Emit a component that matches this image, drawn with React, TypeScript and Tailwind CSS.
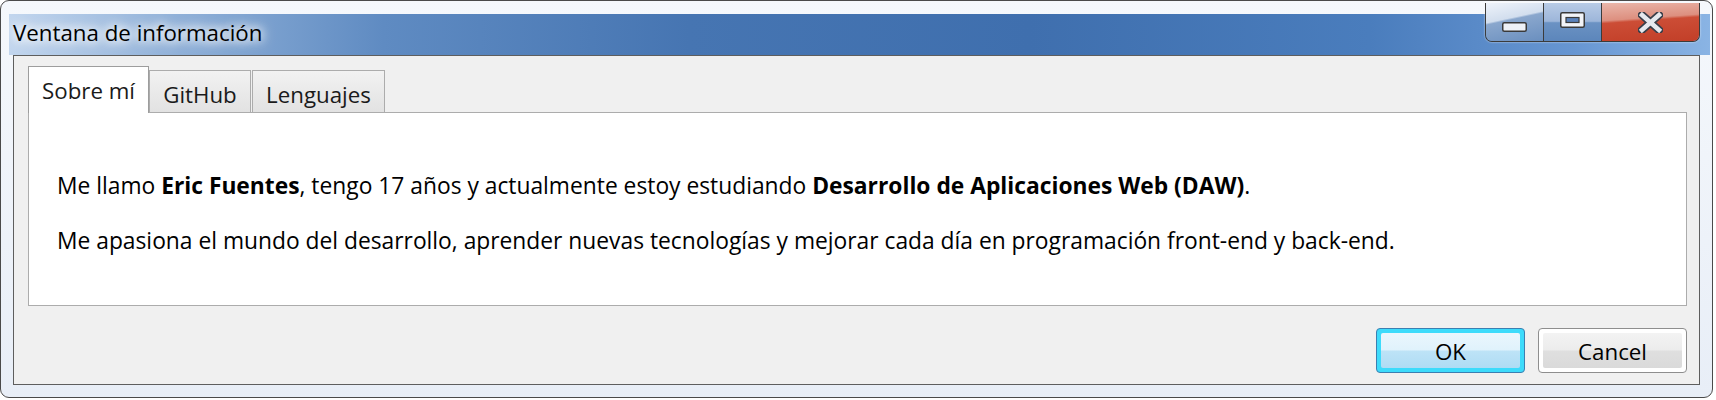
export default function App() {
  return (
    <div className="w-[1716px] h-[400px] bg-white font-['Open_Sans',sans-serif] text-black">
      <div className="relative w-[1713px] h-[398px] rounded-[9px] border border-[#4a4a4a] bg-[linear-gradient(to_bottom,#f5f8fc,#e8eef7)] flex flex-col overflow-hidden">
        {/* title bar */}
        <div className="h-[54px] pt-[13px] shrink-0">
          <div className="h-[41px] ml-[8px] mr-[2px] flex items-center pl-[4px] pb-[3px] bg-[linear-gradient(to_right,#c2d6ee_0%,#8fb0d8_10%,#5f8bc2_22%,#4675b2_40%,#3f6fae_60%,#4a7dbd_80%,#6796d2_92%,#8ab4e4_100%)]">
            <span className="text-[22.3px] leading-none text-black [text-shadow:0_0_8px_#fff,0_0_12px_#fff,0_0_16px_#fff]">
              Ventana de información
            </span>
          </div>
        </div>

        {/* window controls */}
        <div className="absolute top-[2px] right-[12px] h-[39px] flex border border-t-0 border-[#3b3b3b] rounded-b-[7px] overflow-hidden shadow-[0_0_2px_rgba(255,255,255,0.8)]">
          <div className="w-[58px] h-full border-r border-[#3b3b3b] flex items-start justify-center pt-[19px] bg-[linear-gradient(168deg,#eef3fa_0%,#d2deee_40%,#8aa7cd_44%,#6a8fbf_100%)]">
            <svg width="25" height="10" viewBox="0 0 25 10">
              <rect x="0.75" y="0.75" width="23.5" height="8.5" rx="1.5" fill="#eef1f6" stroke="#3a3a3a" strokeWidth="1.5" />
            </svg>
          </div>
          <div className="w-[58px] h-full border-r border-[#3b3b3b] flex items-start justify-center pt-[9px] bg-[linear-gradient(to_bottom,#b8cbe6_0%,#9db6da_48%,#6b92c3_52%,#5c86bb_100%)]">
            <svg width="25" height="16" viewBox="0 0 25 16">
              <rect x="0.75" y="0.75" width="23.5" height="14.5" rx="1.5" fill="#f2f4f8" stroke="#3a3a3a" strokeWidth="1.5" />
              <rect x="6" y="5.5" width="13" height="5" fill="#5a82bb" stroke="#3a3a3a" strokeWidth="1.2" />
            </svg>
          </div>
          <div className="w-[97px] h-full flex items-start justify-center pt-[9px] bg-[linear-gradient(176deg,#eab7ab_0%,#dd8f7f_40%,#cc4d36_46%,#c23f28_100%)]">
            <svg width="25" height="21" viewBox="0 0 25 21">
              <path d="M4 3 L21 18 M21 3 L4 18" stroke="#3a3f4a" strokeWidth="8" strokeLinecap="square" />
              <path d="M4 3 L21 18 M21 3 L4 18" stroke="#e6e9ee" strokeWidth="4.5" strokeLinecap="square" />
            </svg>
          </div>
        </div>

        {/* client area */}
        <div className="flex-1 mx-[12px] mb-[12px] border border-[#5e5e5e] bg-[#f0f0f0] flex flex-col pl-[14px] pr-[12px] pt-[9px]">
          {/* tab headers */}
          <div className="flex items-end h-[47px] shrink-0">
            <div className="relative z-10 w-[121px] h-[47px] -mb-px bg-white border border-b-0 border-[#9d9d9d] flex items-start justify-center pt-[10px] text-[22.3px] leading-[28px] text-[#1a1a1a]">
              Sobre mí
            </div>
            <div className="w-[102px] h-[42px] border border-b-0 border-[#acacac] bg-[linear-gradient(to_bottom,#f2f2f2,#e2e2e2)] flex items-start justify-center pt-[10px] text-[22.3px] leading-[28px] text-[#1a1a1a]">
              GitHub
            </div>
            <div className="w-[133px] h-[42px] ml-px border border-b-0 border-[#acacac] bg-[linear-gradient(to_bottom,#f2f2f2,#e2e2e2)] flex items-start justify-center pt-[10px] text-[22.3px] leading-[28px] text-[#1a1a1a]">
              Lenguajes
            </div>
          </div>

          {/* tab panel */}
          <div className="h-[194px] shrink-0 bg-white border border-[#acacac] pl-[28px] pt-[58px] text-[22.8px] leading-[30px]">
            <p>
              Me llamo <b>Eric Fuentes</b>, tengo 17 años y actualmente estoy estudiando{" "}
              <b>Desarrollo de Aplicaciones Web (DAW)</b>.
            </p>
            <p className="mt-[25px]">
              Me apasiona el mundo del desarrollo, aprender nuevas tecnologías y mejorar cada día en programación front-end y back-end.
            </p>
          </div>

          {/* buttons */}
          <div className="flex justify-end gap-[13px] mt-[22px]">
            <div className="w-[149px] h-[45px] rounded-[4px] border border-[#3c7fb1] bg-[#3ddbfb] p-[4px]">
              <div className="h-full rounded-[2px] bg-[linear-gradient(to_bottom,#eaf6fd_0%,#e0f2fc_48%,#bde3f7_52%,#afdcf4_100%)] flex items-center justify-center pt-[3px] text-[22.3px] leading-none">
                OK
              </div>
            </div>
            <div className="w-[149px] h-[45px] rounded-[4px] border border-[#8e8e8e] bg-white p-[4px]">
              <div className="h-full rounded-[2px] bg-[linear-gradient(to_bottom,#f3f3f3_0%,#ececec_48%,#dfdfdf_52%,#dadada_100%)] flex items-center justify-center pt-[3px] text-[22.3px] leading-none">
                Cancel
              </div>
            </div>
          </div>
        </div>
      </div>
    </div>
  );
}
